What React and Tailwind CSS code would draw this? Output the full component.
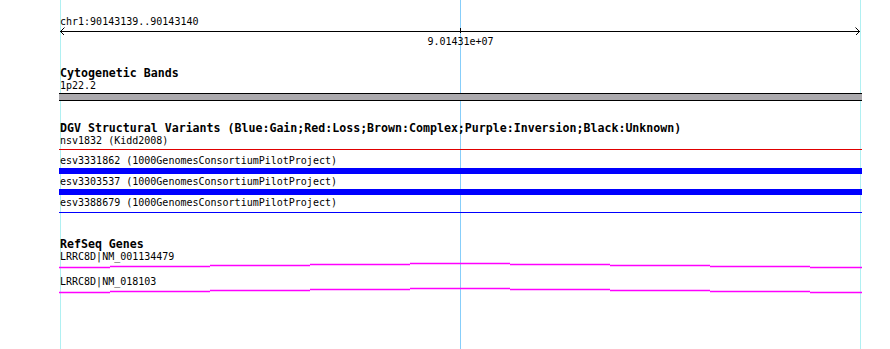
import React from 'react';

// Genome browser snapshot: ruler, cytoband, DGV variants and RefSeq gene tracks.
const mono = { fontFamily: '"DejaVu Sans Mono", "Liberation Mono", monospace' };

const variants = [
  { id: 'esv3331862', bar: true },
  { id: 'esv3303537', bar: true },
  { id: 'esv3388679', bar: false },
];

// exon-ish step line, points relative to track left (x=59)
const stepY = [4, 3, 2, 1, 0, 1, 2, 3, 4];
const stepX = [0, 51, 151, 251, 351, 451, 551, 651, 751, 803];

function GeneLine() {
  return (
    <svg width="803" height="7" className="block">
      {stepY.map((y, i) => (
        <line
          key={i}
          x1={stepX[i]}
          x2={stepX[i + 1]}
          y1={y + 1.5}
          y2={y + 1.5}
          stroke="#ff00ff"
          strokeWidth="1.4"
        />
      ))}
    </svg>
  );
}

function Label({ children, bold }) {
  return (
    <div
      className={bold ? 'h-[12px] pl-px text-[11.6px] leading-[12px] font-bold text-black whitespace-nowrap' : 'h-[12px] pt-px pl-px text-[10px] leading-[12px] text-black whitespace-nowrap'}
      style={mono}
    >
      {children}
    </div>
  );
}

export default function App() {
  return (
    <div className="relative w-[890px] h-[349px] overflow-hidden bg-white">
      {/* guide lines */}
      <div className="absolute top-0 bottom-0 left-[60px] w-px bg-[#b0f0f2]" />
      <div className="absolute top-0 bottom-0 left-[460px] w-px bg-[#87cefa]" />
      <div className="absolute top-0 bottom-0 left-[860px] w-px bg-[#b0f0f2]" />

      <div className="relative ml-[59px] w-[803px] pt-[15px] flex flex-col">
        <Label>chr1:90143139..90143140</Label>
        <svg width="803" height="8" className="block">
          <line x1="1" x2="801" y1="4.5" y2="4.5" stroke="#000" strokeWidth="1" />
          <polyline points="5.5,0.5 1.5,4.5 5.5,8.5" fill="none" stroke="#000" strokeWidth="1" />
          <polyline points="796.5,0.5 800.5,4.5 796.5,8.5" fill="none" stroke="#000" strokeWidth="1" />
          <line x1="401.5" x2="401.5" y1="1" y2="6" stroke="#000" strokeWidth="1" />
        </svg>
        <div className="h-[12px] pt-px text-center text-[10px] leading-[12px] text-black" style={mono}>
          9.01431e+07
        </div>

        <div className="mt-[20px]">
          <Label bold>Cytogenetic Bands</Label>
        </div>
        <Label>1p22.2</Label>
        <div className="mt-[2px] h-[8px] border-y border-black bg-[#aba9ad]" />

        <div className="mt-[21px]">
          <Label bold>DGV Structural Variants (Blue:Gain;Red:Loss;Brown:Complex;Purple:Inversion;Black:Unknown)</Label>
        </div>
        <Label>nsv1832 (Kidd2008)</Label>
        <div className="mt-[3px] h-px bg-[#e00000]" />

        {variants.map((v, i) => (
          <div key={v.id} className={i === 0 ? 'mt-[4px]' : 'mt-[1px]'}>
            <Label>{v.id} (1000GenomesConsortiumPilotProject)</Label>
            {v.bar ? (
              <div className="mt-[2px] h-[6px] bg-[#0000ff]" />
            ) : (
              <div className="mt-[4px] h-px bg-[#0000ff]" />
            )}
          </div>
        ))}

        <div className="mt-[25px]">
          <Label bold>RefSeq Genes</Label>
        </div>
        <Label>LRRC8D|NM_001134479</Label>
        <GeneLine />
        <div className="mt-[6px]">
          <Label>LRRC8D|NM_018103</Label>
        </div>
        <GeneLine />
      </div>
    </div>
  );
}
